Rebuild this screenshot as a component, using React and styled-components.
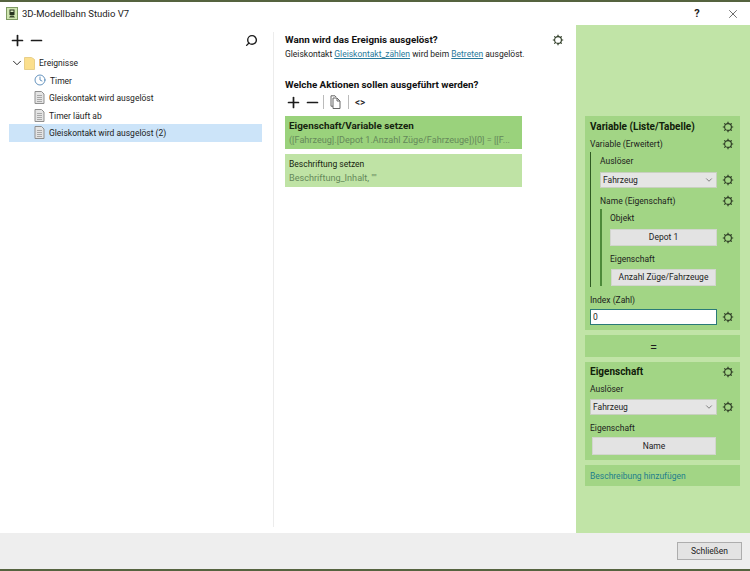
import React from 'react';
import styled, { createGlobalStyle } from 'styled-components';
import { ChevronDown, Clock, Minus, Plus, Search, X } from 'lucide-react';

const GlobalStyle = createGlobalStyle`
  html, body {
    margin: 0;
    padding: 0;
    background: #fff;
  }
`;

const Window = styled.div`
  width: 750px;
  height: 571px;
  display: flex;
  flex-direction: column;
  overflow: hidden;
  background: #fff;
  color: #1c1c1c;
  font-family: Roboto, "Noto Sans", sans-serif;
  font-size: 8.5px;
  line-height: 17px;
`;

const Edge = styled.div`
  height: 2px;
  flex: none;
  background: #55633f;
`;

const TitleBar = styled.div`
  height: 23px;
  flex: none;
  display: flex;
  align-items: center;
  gap: 2px;
  padding: 0 0 0 6px;
`;

const TitleText = styled.span`
  margin: 0 0 0 2px;
  font-size: 9.5px;
  flex: 1;
`;

const TitleButton = styled.div`
  width: 34px;
  display: flex;
  align-items: center;
  justify-content: center;
  font-size: 11px;
  font-weight: 700;
`;

const Main = styled.div`
  flex: 1;
  display: flex;
  min-height: 0;
`;

const LeftPane = styled.div`
  width: 273px;
  flex: none;
  padding: 7px 11px 6px 9px;
  box-sizing: border-box;
`;

const PaneDivider = styled.div`
  width: 1px;
  flex: none;
  margin: 7px 0 6px;
  background: #ececec;
`;

const Toolbar = styled.div`
  height: 16px;
  display: flex;
  align-items: center;
  gap: 2px;
`;

const LeftToolbar = styled(Toolbar)`
  margin: 0 0 6px 0;
  padding-right: 4px;
`;

const Spacer = styled.div`
  flex: 1;
`;

const MirroredSearch = styled(Search)`
  transform: scaleX(-1);
`;

const TreeRow = styled.div`
  height: 17.5px;
  display: flex;
  align-items: center;
  gap: 4px;
  padding-left: ${(props) => props.indent}px;
  background: ${(props) => (props.selected ? '#cce4f9' : 'transparent')};
`;

const TreeLabel = styled.span`
  padding-top: 2px;
`;

const TreeChevron = styled(ChevronDown)`
  margin-right: -4px;
`;

const CenterPane = styled.div`
  width: 302px;
  flex: none;
  box-sizing: border-box;
  padding: 7px 0 0 11px;
`;

const HeadRow = styled.div`
  display: flex;
  justify-content: space-between;
  align-items: center;
  padding-right: 12px;
`;

const Heading = styled.div`
  font-size: 9.8px;
  font-weight: 700;
  line-height: 16px;
  color: #111;
`;

const Sentence = styled.div`
  line-height: 13px;
`;

const Link = styled.a`
  color: #2a7a9c;
  text-decoration: underline;
`;

const QuestionHeading = styled(Heading)`
  margin-top: 16px;
`;

const ActionBar = styled(Toolbar)`
  margin: 1px 0 6px 0;
`;

const BarDivider = styled.div`
  width: 1px;
  height: 14px;
  background: #bbb;
`;

const CopySlot = styled.div`
  display: flex;
  margin: 0 5px 0 4px;
`;

const CodeGlyph = styled.span`
  margin-left: 4px;
  font-size: 10px;
  font-weight: 500;
`;

const ActionCard = styled.div`
  width: 237px;
  height: 33px;
  box-sizing: border-box;
  padding: 3px 4px;
  margin-bottom: 5px;
  background: ${(props) => (props.active ? '#9ad27c' : '#bfe3a5')};
  line-height: 14px;
`;

const CardTitle = styled.div`
  font-weight: ${(props) => (props.active ? 700 : 400)};
  font-size: ${(props) => (props.active ? 9.9 : 8.5)}px;
  color: #16240f;
`;

const CardDetail = styled.div`
  font-size: 9.1px;
  color: #65895a;
  white-space: nowrap;
`;

const RightPane = styled.div`
  flex: 1;
  background: #c1e4a7;
  padding: 91px 10px 0 9px;
  box-sizing: border-box;
  display: flex;
  flex-direction: column;
  gap: 5px;
`;

const Panel = styled.div`
  background: #a2d585;
  padding: ${(props) => props.pad || '2px 6px 5px 5px'};
`;

const EqualsPanel = styled(Panel)`
  height: 22px;
  box-sizing: border-box;
  padding: 2px 23px 0 5px;
  display: flex;
  align-items: center;
  justify-content: center;
  font-size: 13px;
`;

const Row = styled.div`
  display: grid;
  grid-template-columns: 1fr 12px;
  column-gap: 5px;
  align-items: center;
  margin-top: ${(props) => props.top || 0}px;
`;

const PanelTitle = styled.div`
  font-size: 10px;
  font-weight: 700;
  color: #10200a;
`;

const Label = styled.div`
  height: 17px;
  box-sizing: border-box;
  padding-top: 1px;
`;

const Nested = styled.div`
  border-left: 1px solid #2f5a22;
  padding-left: 9px;
  padding-bottom: 1px;
`;

const InnerNested = styled(Nested)`
  border-left: 2px solid #4d8a3a;
  padding-left: 8px;
  padding-bottom: 0;
`;

const Select = styled.div`
  height: 16px;
  box-sizing: border-box;
  display: flex;
  align-items: center;
  justify-content: space-between;
  padding: 0 2px;
  background: #e5e5e5;
  border: 1px solid #c8d0c0;
`;

const Button = styled.div`
  height: ${(props) => props.h || 17}px;
  box-sizing: border-box;
  display: flex;
  align-items: center;
  justify-content: center;
  margin: ${(props) => props.inset || 0};
  background: #e3e3e3;
  border: 1px solid #d2d6ce;
`;

const Input = styled.div`
  height: 16px;
  box-sizing: border-box;
  display: flex;
  align-items: center;
  padding-left: 2px;
  background: #fff;
  border: 1px solid #2b7a78;
`;

const AddLink = styled(Label)`
  color: #1f7f8c;
`;

const Footer = styled.div`
  height: 36px;
  flex: none;
  display: flex;
  align-items: center;
  justify-content: flex-end;
  padding-right: 8px;
  background: #eeeeee;
`;

const CloseButton = styled.div`
  width: 65px;
  height: 18px;
  box-sizing: border-box;
  display: flex;
  align-items: center;
  justify-content: center;
  background: #e3e3e3;
  border: 1px solid #adadad;
`;

const AppIcon = () => (
  <svg width="12" height="13" viewBox="0 0 12 13">
    <rect x="0.5" y="0.5" width="11" height="12" fill="#cfe6b0" stroke="#7e9a62" />
    <path d="M3.5 2.5h5v5.5h-5z" fill="#26331f" />
    <rect x="4.5" y="3.5" width="3" height="1.5" fill="#d8e8c0" />
    <path d="M3 10.5 4.5 8.5h3l1.5 2z" fill="#3b4a2d" />
  </svg>
);

const Gear = () => (
  <svg width="12" height="12" viewBox="0 0 12 12" fill="none" stroke="#2c3a24">
    <circle cx="6" cy="6" r="3.4" strokeWidth="1.1" />
    <path
      d="M6 .8v1.8M6 9.4v1.8M.8 6h1.8M9.4 6h1.8M2.3 2.3l1.3 1.3M8.4 8.4l1.3 1.3M9.7 2.3 8.4 3.6M3.6 8.4 2.3 9.7"
      strokeWidth="1.2"
    />
  </svg>
);

const FolderIcon = () => (
  <svg width="11" height="14" viewBox="0 0 11 14">
    <path d="M0.5 1.5h7l3 2v10h-10z" fill="#fbdf8d" stroke="#e8cf8a" />
  </svg>
);

const DocIcon = () => (
  <svg width="11" height="13" viewBox="0 0 11 13">
    <path d="M1 .5h6.5L10 3v9.5H1z" fill="#e4e4e4" stroke="#8f8f8f" />
    <path d="M3 4.5h5M3 6.5h5M3 8.5h5M3 10.5h5" stroke="#a8a8a8" />
  </svg>
);

const CopyIcon = () => (
  <svg width="11" height="14" viewBox="0 0 11 14" fill="none" stroke="#666">
    <path d="M1 .8h4l1 1.2" />
    <path d="M1 .8v10.4h2" />
    <path d="M3 3h4l3 3v7.5H3z" fill="#fff" />
    <path d="M7 3v3h3" />
  </svg>
);

const Tree = [
  { label: 'Timer', icon: <Clock size={12} color="#3f78ad" strokeWidth={1.6} /> },
  { label: 'Gleiskontakt wird ausgelöst', icon: <DocIcon /> },
  { label: 'Timer läuft ab', icon: <DocIcon /> },
  { label: 'Gleiskontakt wird ausgelöst (2)', icon: <DocIcon />, selected: true },
];

const App = () => {
  return (
    <Window>
      <GlobalStyle />
      <Edge />
      <TitleBar>
        <AppIcon />
        <TitleText>3D-Modellbahn Studio V7</TitleText>
        <TitleButton>?</TitleButton>
        <TitleButton><X size={14} strokeWidth={1.1} /></TitleButton>
      </TitleBar>
      <Main>
        <LeftPane>
          <LeftToolbar>
            <Plus size={17} strokeWidth={2.4} />
            <Minus size={17} strokeWidth={2.4} />
            <Spacer />
            <MirroredSearch size={13} strokeWidth={2.6} />
          </LeftToolbar>
          <TreeRow indent={1}>
            <TreeChevron size={14} strokeWidth={1.6} />
            <FolderIcon />
            <TreeLabel>Ereignisse</TreeLabel>
          </TreeRow>
          {Tree.map((item) => (
            <TreeRow key={item.label} indent={25} selected={item.selected}>
              {item.icon}
              <TreeLabel>{item.label}</TreeLabel>
            </TreeRow>
          ))}
        </LeftPane>
        <PaneDivider />
        <CenterPane>
          <HeadRow>
            <Heading>Wann wird das Ereignis ausgelöst?</Heading>
            <Gear />
          </HeadRow>
          <Sentence>
            Gleiskontakt <Link>Gleiskontakt_zählen</Link> wird beim <Link>Betreten</Link> ausgelöst.
          </Sentence>
          <QuestionHeading>Welche Aktionen sollen ausgeführt werden?</QuestionHeading>
          <ActionBar>
            <Plus size={17} strokeWidth={2.4} />
            <Minus size={17} strokeWidth={2.4} />
            <BarDivider />
            <CopySlot><CopyIcon /></CopySlot>
            <BarDivider />
            <CodeGlyph>&lt;&gt;</CodeGlyph>
          </ActionBar>
          <ActionCard active>
            <CardTitle active>Eigenschaft/Variable setzen</CardTitle>
            <CardDetail>([Fahrzeug].[Depot 1.Anzahl Züge/Fahrzeuge])[0] = [[F...</CardDetail>
          </ActionCard>
          <ActionCard>
            <CardTitle>Beschriftung setzen</CardTitle>
            <CardDetail>Beschriftung_Inhalt, ""</CardDetail>
          </ActionCard>
        </CenterPane>
        <RightPane>
          <Panel>
            <Row><PanelTitle>Variable (Liste/Tabelle)</PanelTitle><Gear /></Row>
            <Row><Label>Variable (Erweitert)</Label><Gear /></Row>
            <Nested>
              <Label>Auslöser</Label>
              <Row top={3}>
                <Select>Fahrzeug<ChevronDown size={10} strokeWidth={1.2} /></Select>
                <Gear />
              </Row>
              <Row top={4}><Label>Name (Eigenschaft)</Label><Gear /></Row>
              <InnerNested>
                <Label>Objekt</Label>
                <Row top={3}><Button>Depot 1</Button><Gear /></Row>
                <Row top={4}><Label>Eigenschaft</Label><span /></Row>
                <Row top={2}><Button inset="0 1px">Anzahl Züge/Fahrzeuge</Button><span /></Row>
              </InnerNested>
            </Nested>
            <Row top={4}><Label>Index (Zahl)</Label><span /></Row>
            <Row top={1}><Input>0</Input><Gear /></Row>
          </Panel>
          <EqualsPanel>=</EqualsPanel>
          <Panel pad="1px 6px 5px 5px">
            <Row><PanelTitle>Eigenschaft</PanelTitle><Gear /></Row>
            <Label>Auslöser</Label>
            <Row top={2}>
              <Select>Fahrzeug<ChevronDown size={10} strokeWidth={1.2} /></Select>
              <Gear />
            </Row>
            <Row top={4}><Label>Eigenschaft</Label><span /></Row>
            <Row top={1}><Button h={18} inset="0 1px 0 2px">Name</Button><span /></Row>
          </Panel>
          <Panel pad="2px 6px 2px 5px">
            <AddLink>Beschreibung hinzufügen</AddLink>
          </Panel>
        </RightPane>
      </Main>
      <Footer>
        <CloseButton>Schließen</CloseButton>
      </Footer>
      <Edge />
    </Window>
  );
};

export default App;
